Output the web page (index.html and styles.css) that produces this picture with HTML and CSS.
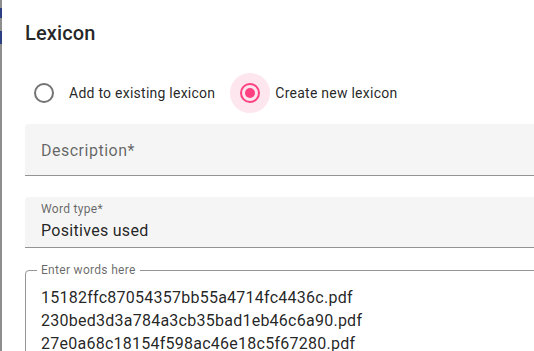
FILE: index.html
```html
<!DOCTYPE html>
<html lang="en">
<head>
<meta charset="utf-8">
<title>Lexicon</title>
<link rel="stylesheet" href="styles.css">
</head>
<body>
<div class="screen">
  <div class="backdrop">
    <span class="bd-seg bd-a"></span>
    <span class="bd-seg bd-b"></span>
  </div>
  <div class="dialog">
    <h2 class="title">Lexicon</h2>
    <div class="radio-group">
      <label class="radio">
        <span class="radio-touch"><span class="radio-outer"></span></span>
        <span class="radio-label">Add to existing lexicon</span>
      </label>
      <label class="radio checked">
        <span class="radio-touch"><span class="radio-outer"><span class="radio-dot"></span></span></span>
        <span class="radio-label">Create new lexicon</span>
      </label>
    </div>
    <div class="filled filled-empty">
      <span class="placeholder">Description*</span>
    </div>
    <div class="filled filled-value">
      <span class="float-label">Word type*</span>
      <span class="value">Positives used</span>
    </div>
    <fieldset class="outlined">
      <legend class="outline-label">Enter words here</legend>
      <div class="words">
        <div>15182ffc87054357bb55a4714fc4436c.pdf</div>
        <div>230bed3d3a784a3cb35bad1eb46c6a90.pdf</div>
        <div>27e0a68c18154f598ac46e18c5f67280.pdf</div>
      </div>
    </fieldset>
  </div>
</div>
</body>
</html>
```

FILE: styles.css
```css
* { box-sizing: border-box; }
html, body {
  margin: 0;
  padding: 0;
  width: 534px;
  height: 351px;
  overflow: hidden;
  background: #fff;
}
body {
  font-family: Roboto, "Liberation Sans", sans-serif;
  color: rgba(0, 0, 0, 0.87);
}
.screen {
  display: flex;
  height: 351px;
  overflow: hidden;
}
.backdrop {
  width: 2px;
  flex: none;
  background: #8e8e8e;
  display: flex;
  flex-direction: column;
}
.bd-seg {
  display: block;
  width: 2px;
  background: #2b3f82;
}
.bd-a { margin-top: 8px; height: 10px; }
.bd-b { margin-top: 13px; height: 13px; }
.dialog {
  flex: none;
  width: 640px;
  height: 351px;
  overflow: hidden;
  padding: 17px 0 0 23px;
  background: #fff;
}
.title {
  margin: 0;
  font-size: 20px;
  line-height: 32px;
  font-weight: 500;
  letter-spacing: 0.15px;
}
.radio-group {
  display: flex;
  align-items: center;
  margin-top: 24px;
  height: 40px;
  margin-left: -1px;
}
.radio {
  display: flex;
  align-items: center;
  margin-right: 15px;
  font-size: 14px;
  letter-spacing: 0.25px;
}
.radio-touch {
  width: 40px;
  height: 40px;
  border-radius: 50%;
  display: flex;
  align-items: center;
  justify-content: center;
}
.radio.checked .radio-touch {
  background: #fde6ee;
}
.radio-outer {
  width: 20px;
  height: 20px;
  border-radius: 50%;
  border: 2px solid #737373;
  display: flex;
  align-items: center;
  justify-content: center;
}
.radio.checked .radio-outer {
  border-color: #ff4081;
}
.radio-dot {
  width: 10px;
  height: 10px;
  border-radius: 50%;
  background: #ff4081;
}
.radio-label {
  padding-left: 5px;
}
.filled {
  display: flex;
  flex-direction: column;
  background: #f5f5f5;
  border-radius: 4px 4px 0 0;
  border-bottom: 1px solid #949494;
  padding-left: 16px;
}
.filled-empty {
  margin-top: 11px;
  height: 52px;
  padding-top: 15px;
}
.placeholder {
  font-size: 16px;
  line-height: 24px;
  letter-spacing: 0.5px;
  color: rgba(0, 0, 0, 0.6);
}
.filled-value {
  margin-top: 21px;
  height: 51px;
  padding-top: 4px;
}
.float-label {
  font-size: 12px;
  line-height: 16px;
  color: rgba(0, 0, 0, 0.6);
  letter-spacing: 0.3px;
}
.value {
  margin-top: 2px;
  font-size: 16px;
  line-height: 24px;
  letter-spacing: 0.3px;
}
.outlined {
  margin: 14px 0 0 0;
  padding: 8px 0 0 11px;
  border: 1px solid #949494;
  border-radius: 4px;
  height: 120px;
  min-width: 0;
}
.outline-label {
  padding: 0 4px;
  font-size: 12px;
  line-height: 16px;
  color: rgba(0, 0, 0, 0.6);
  letter-spacing: 0.3px;
}
.words {
  padding-left: 4px;
  font-size: 16px;
  line-height: 23px;
  letter-spacing: 0.25px;
}
```
